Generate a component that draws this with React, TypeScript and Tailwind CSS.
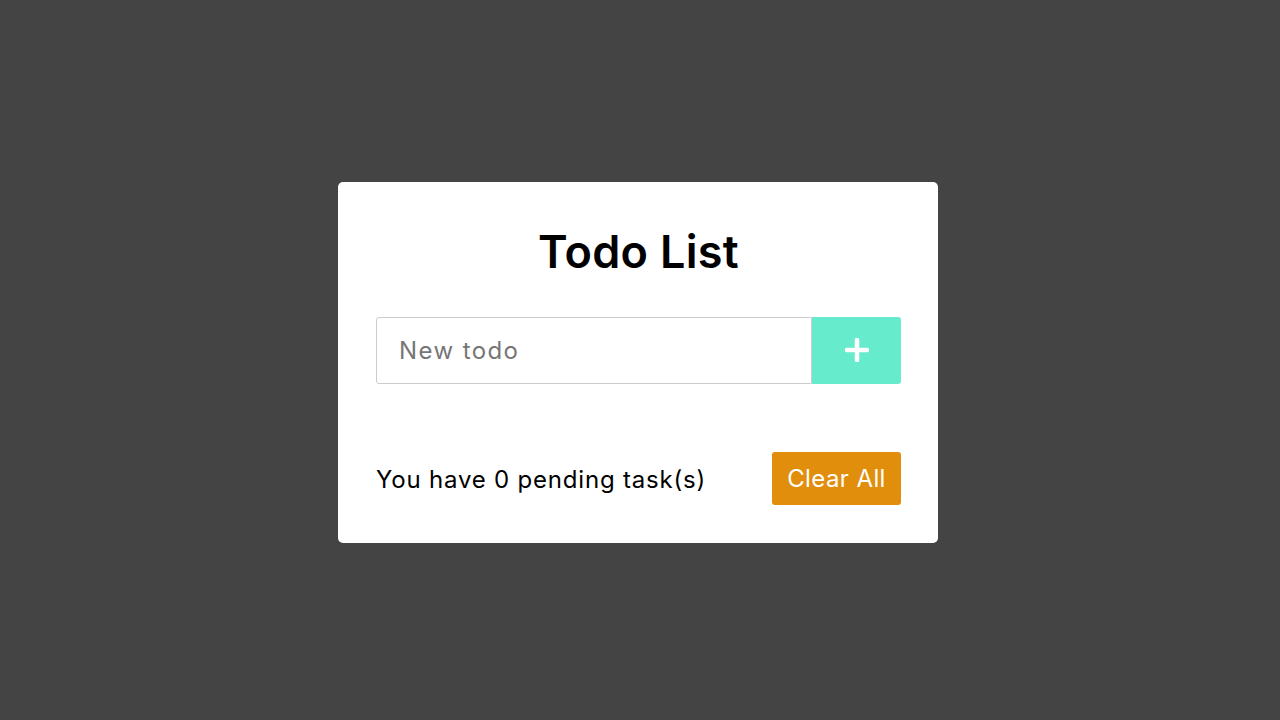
import { useState } from "react";

export default function App() {
  const [todo, setTodo] = useState("");
  const [todos, setTodos] = useState<string[]>([]);

  const addTodo = () => {
    if (!todo.trim()) return;
    setTodos((prev) => [...prev, todo.trim()]);
    setTodo("");
  };

  return (
    <div
      className="min-h-screen bg-[#444444] flex items-center justify-center"
      style={{ fontFamily: "Inter, 'Noto Sans', sans-serif" }}
    >
      <div className="w-[600px] bg-white rounded-[5px] pl-[38px] pr-[37px] pt-[42px] pb-[38px] mr-1 mt-1">
        <h1 className="text-center text-[45px] leading-[56px] font-semibold text-black tracking-[0.3px]">Todo List</h1>

        <div className="flex mt-[37px] h-[67px]">
          <input
            value={todo}
            onChange={(e) => setTodo(e.target.value)}
            placeholder="New todo"
            className="flex-1 min-w-0 border border-[#cccccc] rounded-l-[3px] px-[22px] pt-[2px] text-[24px] tracking-[1.4px] text-black placeholder:text-[#767676] outline-none"
          />
          <button
            onClick={addTodo}
            className="w-[89px] bg-[#66ebcc] rounded-r-[3px] flex items-center justify-center"
            aria-label="Add todo"
          >
            <svg width="24" height="24" viewBox="0 0 24 24" fill="none">
              <path d="M12 2v20M2 12h20" stroke="white" strokeWidth="4.5" strokeLinecap="round" />
            </svg>
          </button>
        </div>

        <ul>
          {todos.map((t, i) => (
            <li key={i} className="text-[20px] py-2">{t}</li>
          ))}
        </ul>

        <div className="flex items-center justify-between mt-[68px]">
          <span className="text-[24px] tracking-[0.8px] text-black pt-[3px]">You have {todos.length} pending task(s)</span>
          <button
            onClick={() => setTodos([])}
            className="h-[53px] w-[129px] bg-[#e08e0b] rounded-[3px] text-white text-[24px] tracking-[0.4px] pt-[2px]"
          >
            Clear All
          </button>
        </div>
      </div>
    </div>
  );
}
